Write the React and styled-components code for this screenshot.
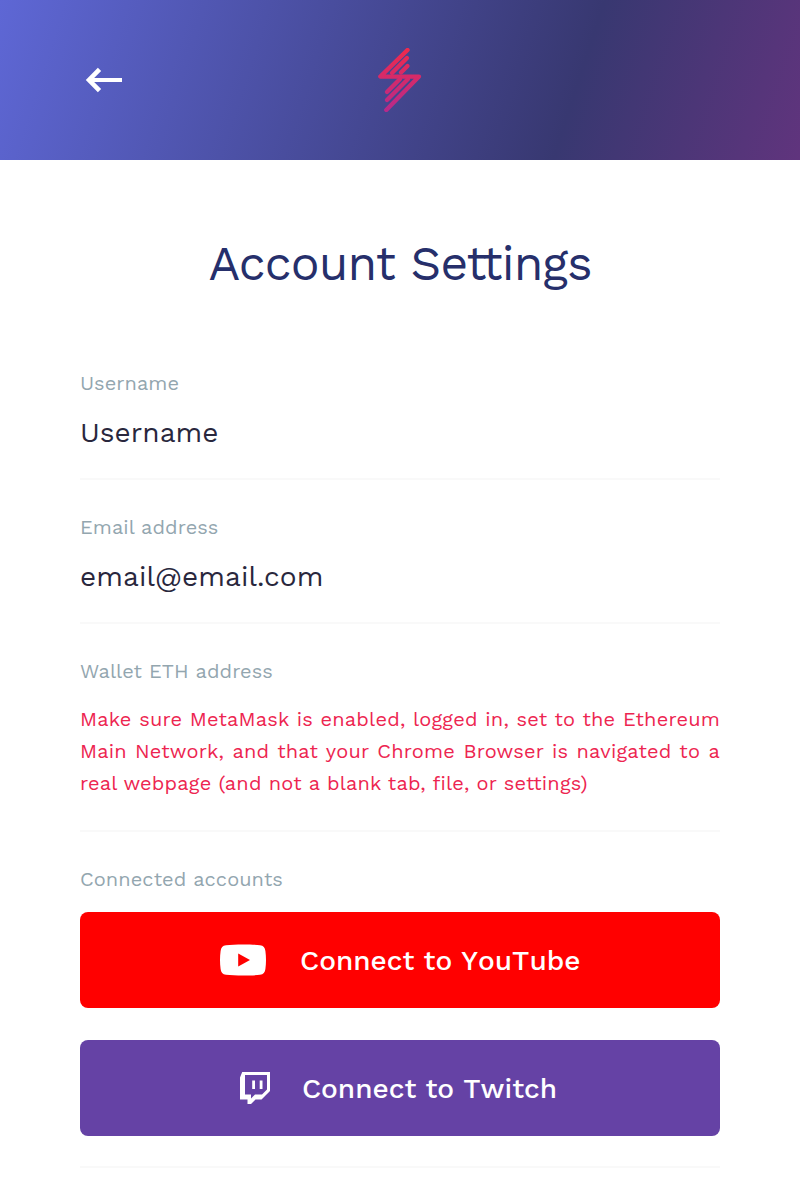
import React from "react";
import styled, { createGlobalStyle } from "styled-components";

const GlobalStyle = createGlobalStyle`
  * { box-sizing: border-box; }
  body {
    margin: 0;
    background: #fff;
    font-family: "Work Sans", "Open Sans", sans-serif;
  }
`;

const Page = styled.div`
  height: 1200px;
  overflow: hidden;
`;

const Header = styled.header`
  display: grid;
  grid-template-columns: 1fr auto 1fr;
  align-items: center;
  height: 160px;
  padding: 0 80px;
  background: linear-gradient(108deg, #5e67d5 0%, #383871 71%, #60347d 100%);
`;

const BackButton = styled.button`
  display: flex;
  width: 48px;
  height: 48px;
  padding: 0;
  border: 0;
  background: none;
`;

const Main = styled.main`
  padding: 72px 80px 0;
`;

const Title = styled.h1`
  margin: 0 0 72px;
  color: #262f6b;
  font-size: 48px;
  font-weight: 400;
  line-height: 64px;
  letter-spacing: -0.9px;
  text-align: center;
  white-space: nowrap;
`;

const Field = styled.section`
  margin-bottom: 32px;
  padding-bottom: ${(p) => p.$space}px;
  border-bottom: 2px solid #f9f9f9;
`;

const Label = styled.div`
  padding-bottom: ${(p) => p.$gap}px;
  color: #93a6af;
  font-size: 20px;
  line-height: 30px;
  letter-spacing: 0.07px;
`;

const Value = styled.div`
  color: #29273d;
  font-size: 28px;
  line-height: 34px;
  letter-spacing: 0.08px;
`;

const Warning = styled.p`
  margin: 0;
  color: #ed2550;
  font-size: 20px;
  line-height: 32px;
  letter-spacing: 0.2px;
  text-align: justify;
`;

const ConnectButton = styled.button`
  display: flex;
  align-items: center;
  justify-content: center;
  gap: ${(p) => p.$gap}px;
  width: 100%;
  height: 96px;
  margin: 0 0 ${(p) => p.$below || 0}px;
  padding: 0 ${(p) => p.$inset || 0}px 0 0;
  border: 0;
  border-radius: 8px;
  background: ${(p) => p.$color};
  color: #fff;
  font-family: inherit;
  font-size: 28px;
  font-weight: 500;
  font-kerning: none;
`;

const ArrowIcon = () => (
  <svg width="48" height="48" viewBox="0 0 48 48" fill="none" stroke="#fff">
    <path strokeWidth="4" d="M42 24H9" />
    <path strokeWidth="4.6" d="M19.5 13.3L9 24L19.5 34.7" />
  </svg>
);

const Logo = () => (
  <svg width="44" height="64" viewBox="0 0 44 64" fill="none" stroke="url(#bolt)" strokeWidth="4.3" strokeLinecap="round" strokeLinejoin="round">
    <defs>
      <linearGradient id="bolt" gradientUnits="userSpaceOnUse" x1="0" y1="0" x2="0" y2="64">
        <stop offset="0" stopColor="#f02a4c" />
        <stop offset="1" stopColor="#b52a8c" />
      </linearGradient>
    </defs>
    <path d="M29.5 2L2.3 28.6H41L8.3 62" />
    <path d="M29 10L14 25M29.5 18L23 24.5M9 44L22 31M9 52L30 31" />
  </svg>
);

const YouTubeIcon = () => (
  <svg width="46" height="32" viewBox="0 0 46 32">
    <path fill="#fff" d="M6 1.2C15 .2 31 .2 40 1.2C43.5 1.6 45 3.5 45.4 7C46.2 13 46.2 19 45.4 25C45 28.5 43.5 30.4 40 30.8C31 31.8 15 31.8 6 30.8C2.5 30.4 1 28.5.6 25C-.2 19-.2 13 .6 7C1 3.5 2.5 1.6 6 1.2Z" />
    <path fill="#f00" d="M18.2 9.5V22.5L30 16Z" />
  </svg>
);

const TwitchIcon = () => (
  <svg width="30" height="32" viewBox="0 0 30 32" fill="#fff">
    <path fillRule="evenodd" d="M2.2 0H30V19L21.5 27.5H15.5L11 32H7.5V27.5H0V5.6ZM5 3V22.5H11V26.5L15 22.5H22L27 17.5V3Z" />
    <path d="M12.2 8.5H15V17H12.2ZM19.7 8.5H22.5V17H19.7Z" />
  </svg>
);

export default function App() {
  return (
    <Page>
      <GlobalStyle />
      <Header>
        <BackButton aria-label="Back"><ArrowIcon /></BackButton>
        <Logo />
      </Header>
      <Main>
        <Title>Account Settings</Title>
        <Field $space={28}>
          <Label $gap={18}>Username</Label>
          <Value>Username</Value>
        </Field>
        <Field $space={28}>
          <Label $gap={18}>Email address</Label>
          <Value>email@email.com</Value>
        </Field>
        <Field $space={31}>
          <Label $gap={17}>Wallet ETH address</Label>
          <Warning>
            Make sure MetaMask is enabled, logged in, set to the Ethereum Main Network, and that your Chrome Browser is navigated to a real webpage (and not a blank tab, file, or settings)
          </Warning>
        </Field>
        <Field $space={30}>
          <Label $gap={18}>Connected accounts</Label>
          <ConnectButton $color="#f00" $gap={34.5} $below={32}><YouTubeIcon /><span>Connect to YouTube</span></ConnectButton>
          <ConnectButton $color="#6542a5" $gap={32} $inset={3}><TwitchIcon /><span>Connect to Twitch</span></ConnectButton>
        </Field>
      </Main>
    </Page>
  );
}
